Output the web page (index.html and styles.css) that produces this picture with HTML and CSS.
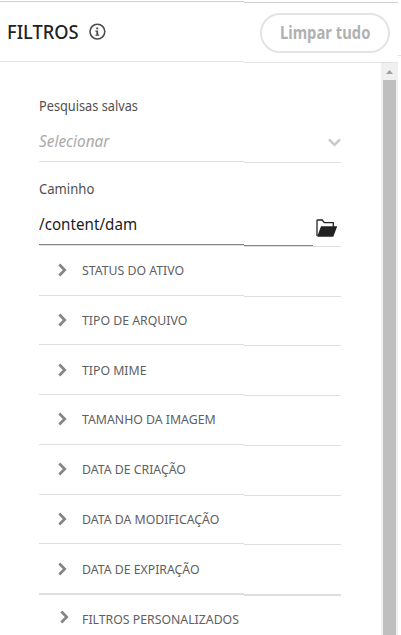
FILE: index.html
```html
<!DOCTYPE html>
<html lang="pt-BR">
<head>
<meta charset="utf-8">
<title>Filtros</title>
<link rel="stylesheet" href="styles.css">
</head>
<body>
<div class="rule rule-top"><i></i><i></i></div>
<header class="header">
  <h1><span class="t-title">FILTROS</span></h1>
  <svg class="info" width="18" height="18" viewBox="0 0 18 18"><circle cx="9.4" cy="8.6" r="7.4" fill="none" stroke="#4b4b4b" stroke-width="1.6"/><path d="M8.2 4.5h2v1.8h-2zM7.4 7.6h2.8v4h1v1.1H7.4v-1.1h1V8.7h-1z" fill="#4b4b4b"/></svg>
  <button class="clear"><span class="t-clear">Limpar tudo</span></button>
</header>
<div class="rule rule-head"><i></i><i></i><i class="edge"></i></div>
<div class="body">
  <main class="filters">
    <label class="label first"><span class="t-saved">Pesquisas salvas</span></label>
    <div class="select"><span class="t-select">Selecionar</span><svg width="13" height="9" viewBox="0 0 13 9"><path d="M1 1.3l5.5 5.5L12 1.3" fill="none" stroke="#c8c8c8" stroke-width="2.5"/></svg></div>
    <div class="rule"><i></i><i></i></div>
    <label class="label second"><span class="t-path">Caminho</span></label>
    <div class="path"><span class="t-value">/content/dam</span><svg width="22" height="19" viewBox="0 0 22 19"><path d="M1 17V1.6Q1 1 1.6 1H6.2L8.3 3.7H17.3V8" fill="none" stroke="#222" stroke-width="1.3"/><path d="M5 7.2H21.2L17.3 17.7H1.2z" fill="#222"/></svg></div>
    <div class="rule dark"><i></i><i></i></div>
    <div class="rule light"><i></i><i></i></div>
    <section class="row r49 up"><svg class="chev" width="9" height="14" viewBox="0 0 9 14"><path d="M1.3 1.5L6.7 7l-5.4 5.5"/></svg><span>STATUS DO ATIVO</span></section>
    <div class="rule"><i></i><i></i></div>
    <section class="row r48"><svg class="chev" width="9" height="14" viewBox="0 0 9 14"><path d="M1.3 1.5L6.7 7l-5.4 5.5"/></svg><span>TIPO DE ARQUIVO</span></section>
    <div class="rule"><i></i><i></i></div>
    <section class="row r49"><svg class="chev" width="9" height="14" viewBox="0 0 9 14"><path d="M1.3 1.5L6.7 7l-5.4 5.5"/></svg><span>TIPO MIME</span></section>
    <div class="rule"><i></i><i></i></div>
    <section class="row r49 up"><svg class="chev" width="9" height="14" viewBox="0 0 9 14"><path d="M1.3 1.5L6.7 7l-5.4 5.5"/></svg><span>TAMANHO DA IMAGEM</span></section>
    <div class="rule"><i></i><i></i></div>
    <section class="row r49 up"><svg class="chev" width="9" height="14" viewBox="0 0 9 14"><path d="M1.3 1.5L6.7 7l-5.4 5.5"/></svg><span>DATA DE CRIAÇÃO</span></section>
    <div class="rule"><i></i><i></i></div>
    <section class="row r48"><svg class="chev" width="9" height="14" viewBox="0 0 9 14"><path d="M1.3 1.5L6.7 7l-5.4 5.5"/></svg><span>DATA DA MODIFICAÇÃO</span></section>
    <div class="rule"><i></i><i></i></div>
    <section class="row r49"><svg class="chev" width="9" height="14" viewBox="0 0 9 14"><path d="M1.3 1.5L6.7 7l-5.4 5.5"/></svg><span>DATA DE EXPIRAÇÃO</span></section>
    <div class="rule thick"><i></i><i></i></div>
    <section class="row last"><svg class="chev" width="9" height="14" viewBox="0 0 9 14"><path d="M1.3 1.5L6.7 7l-5.4 5.5"/></svg><span>FILTROS PERSONALIZADOS</span></section>
  </main>
  <aside class="scrollbar"><svg width="17" height="17" viewBox="0 0 17 17"><path d="M5 11l3.5-4 3.5 4z" fill="#a0a0a0"/></svg><div class="thumb"></div></aside>
</div>
</body>
</html>
```
FILE: styles.css
```css
* { box-sizing: border-box; }
body { margin: 0; width: 401px; height: 635px; overflow: hidden; background: #fff; padding-top: 1px; font-family: "Noto Sans", sans-serif; }

span { display: inline-block; transform-origin: 0 50%; white-space: nowrap; }
.t-title { transform: scaleX(.96); }
.t-clear { transform: scaleX(.87); }
.t-saved { transform: scaleX(.91); }
.t-select { transform: scaleX(.905); }
.t-path { transform: scaleX(.935); }
.t-value { transform: scaleX(.893); }
.row span { transform: scaleX(.945); }

.rule { display: flex; height: 1px; }
.rule i { flex: none; width: 205px; height: 1px; background: #dedede; }
.rule i + i { width: 97px; margin-top: 1px; }
.rule-top i { width: 244px; background: #d0d0d0; }
.rule-top i + i { width: 154px; }
.rule-head i { width: 244px; background: #e3e3e3; }
.rule-head i + i { width: 154px; }
.rule-head i.edge { width: 3px; margin-top: -6px; }
.rule.dark { position: relative; z-index: 1; }
.rule.dark i { background: #868686; }
.rule.dark i + i { width: 69px; }
.rule.thick, .rule.thick i { height: 2px; }

.header { display: flex; align-items: center; height: 59px; padding-left: 7px; }
h1 { margin: 0; width: 81px; font-size: 19px; line-height: 26px; font-weight: 500; color: #222; }
.info { flex: none; }
.clear { margin: 2px 0 0 154px; width: 130px; height: 40px; padding: 1px 0 0 18px; border: 2px solid #e4e4e4; border-radius: 20px; background: #fff; color: #b1b1b1; font: 700 17px/24px "Noto Sans", sans-serif; text-align: left; }

.body { display: flex; justify-content: space-between; height: 573px; padding: 1px 3px 0 39px; }
.filters { width: 302px; height: 572px; }
.label { display: block; height: 20px; font-size: 14px; line-height: 20px; color: #4f4f4f; }
.label.first { margin-top: 33px; }
.label.second { margin-top: 17px; }
.select { display: flex; justify-content: space-between; align-items: center; height: 45px; padding-top: 3px; color: #aaa; font-size: 17px; font-style: italic; }
.select svg { margin-top: 4px; }
.path { display: flex; justify-content: space-between; align-items: center; height: 45px; padding: 3px 3px 0 0; color: #1c1c1c; font-size: 17px; }
.path svg { margin-top: 10px; }
.row { display: flex; align-items: center; padding-left: 19px; gap: 15px; color: #606060; font-size: 13px; line-height: 20px; }
.r49 { height: 49px; }
.r48 { height: 48px; }
.up { padding-bottom: 2px; }
.last { height: 48px; padding-left: 21px; gap: 13px; }
.chev { flex: none; fill: none; stroke: #858585; stroke-width: 2.7; }
.last .chev { margin-top: -5px; }

.scrollbar { width: 17px; height: 572px; background: #f0f0f0; }
.scrollbar svg { display: block; }
.thumb { width: 13px; height: 555px; margin: 0 2px; background: #bfbfbf; }
```
